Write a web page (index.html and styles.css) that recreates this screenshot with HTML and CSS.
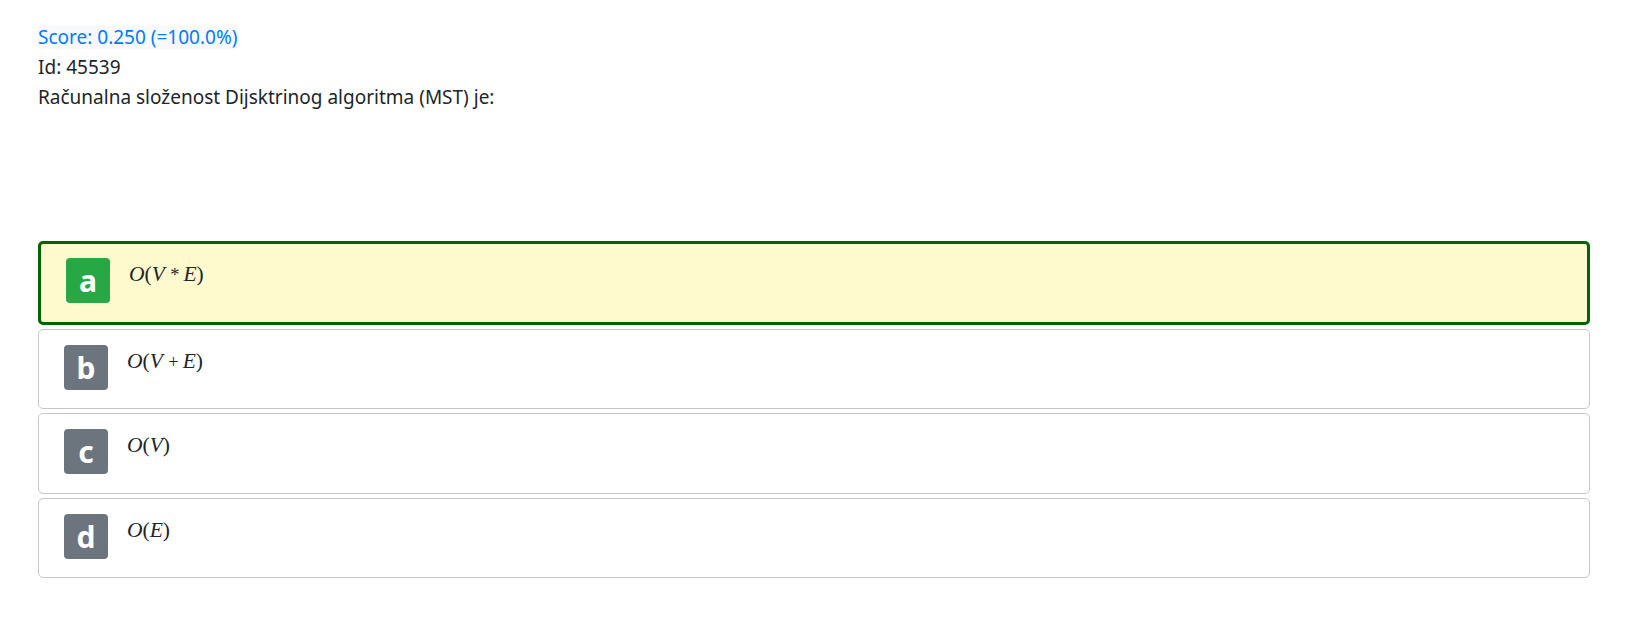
FILE: index.html
```html
<!DOCTYPE html>
<html lang="hr">

<head>
    <meta charset="UTF-8">
    <meta name="viewport" content="width=device-width, initial-scale=1.0">
    <title>Pitanje 45539</title>
    <link rel="stylesheet" href="styles.css">
</head>

<body>
    <main class="quiz">
        <div class="question">
            <div class="line"><span class="score">Score: 0.250 (=100.0%)</span></div>
            <div class="line">Id: 45539</div>
            <div class="line">Računalna složenost Dijsktrinog algoritma (MST) je:</div>
        </div>

        <div class="answers">
            <div class="answer correct">
                <span class="badge">a</span>
                <span class="math"><i>O</i>(<i>V</i><span class="op">*</span><i>E</i>)</span>
            </div>
            <div class="answer">
                <span class="badge">b</span>
                <span class="math"><i>O</i>(<i>V</i><span class="op">+</span><i>E</i>)</span>
            </div>
            <div class="answer">
                <span class="badge">c</span>
                <span class="math"><i>O</i>(<i>V</i>)</span>
            </div>
            <div class="answer">
                <span class="badge">d</span>
                <span class="math"><i>O</i>(<i>E</i>)</span>
            </div>
        </div>
    </main>
</body>

</html>
```

FILE: styles.css
```css
body {
    margin: 0;
    font-family: "Noto Sans", "Open Sans", sans-serif;
    font-size: 19px;
    color: #212529;
    background: #fff;
}

.quiz {
    padding: 22px 57px 0 38px;
}

.question {
    height: 219px;
}

.line {
    line-height: 30px;
}

.score {
    display: inline-block;
    line-height: 23px;
    color: #007bff;
    background: #f8f9fa;
}

.answer {
    display: flex;
    align-items: flex-start;
    gap: 19px;
    padding: 15px 25px 18.5px;
    margin-bottom: 4px;
    border: 1px solid #c8c8c8;
    border-radius: 5px;
}

.answer.correct {
    border: 3px solid #006400;
    background: #fffacd;
    padding-top: 14px;
}

.badge {
    width: 44px;
    height: 45px;
    line-height: 45px;
    text-align: center;
    border-radius: 4px;
    background: #6c757d;
    color: #fff;
    font-size: 30px;
    font-weight: 700;
}

.correct .badge {
    background: #28a745;
}

.math {
    font-family: "Liberation Serif", "DejaVu Serif", serif;
    font-size: 21.5px;
    line-height: 30px;
    margin-top: 1px;
}

.math .op {
    margin: 0 0.22em 0 0.3em;
    font-size: 0.85em;
}
```
